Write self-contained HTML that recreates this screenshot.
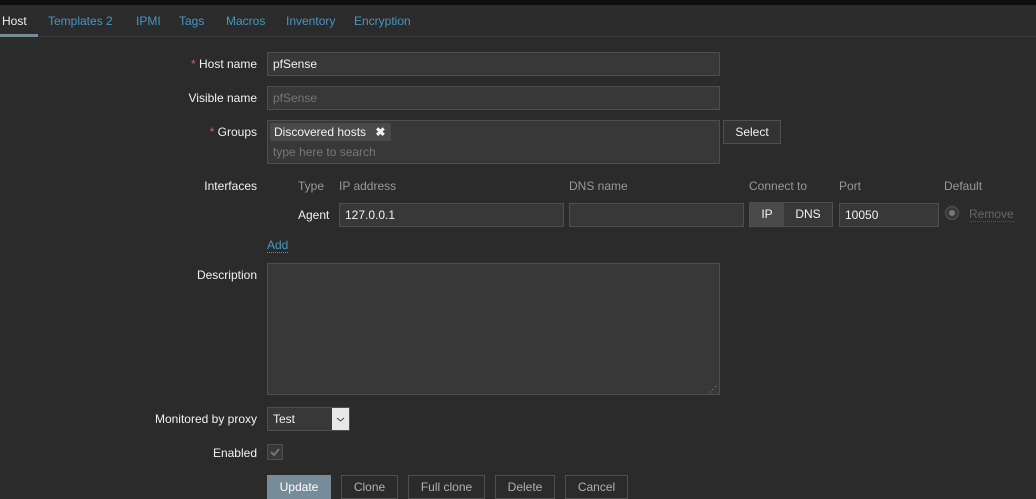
<!DOCTYPE html>
<html><head><style>
*{box-sizing:border-box;margin:0;padding:0}
body{width:1036px;height:498px;background:#2b2b2b;font-family:"Liberation Sans",sans-serif;font-size:12px;color:#f2f2f2;position:relative;overflow:hidden}
.a{position:absolute;white-space:nowrap}
.top{left:0;top:0;width:1036px;height:5px;background:#0e0e0e}
.tabs{left:0;top:5px;width:1036px;height:32px;border-bottom:1px solid #383838}
.tab{top:14px;color:#4796c4;font-size:12px}
.lbl{text-align:right;right:779px;color:#f2f2f2}
.req{color:#e45959}
.in{background:#383838;border:1px solid #4f4f4f;padding:0 5px;line-height:22px;color:#f2f2f2}
.hd{top:179px;color:#999}
.btn{border:1px solid #4f4f4f;color:#b0b0b0;text-align:center;line-height:23px}
</style></head><body>
<div class="a top"></div>
<div class="a tabs"></div>
<div class="a" style="left:0;top:34px;width:38px;height:3px;background:#768d99"></div>
<div class="a tab" style="left:2px;color:#f2f2f2">Host</div>
<div class="a tab" style="left:48px">Templates 2</div>
<div class="a tab" style="left:136px">IPMI</div>
<div class="a tab" style="left:179px">Tags</div>
<div class="a tab" style="left:226px">Macros</div>
<div class="a tab" style="left:286px">Inventory</div>
<div class="a tab" style="left:354px">Encryption</div>

<div class="a lbl" style="top:57px"><span class="req">*</span> Host name</div>
<div class="a in" style="left:267px;top:52px;width:453px;height:24px">pfSense</div>
<div class="a lbl" style="top:91px">Visible name</div>
<div class="a in" style="left:267px;top:86px;width:453px;height:24px;color:#777">pfSense</div>
<div class="a lbl" style="top:125px"><span class="req">*</span> Groups</div>
<div class="a in" style="left:267px;top:120px;width:453px;height:44px;padding:0"></div>
<div class="a" style="left:270px;top:123px;width:121px;height:18px;background:#4a4a4a;border-radius:2px;padding-left:4px;line-height:18px">Discovered hosts <b style="margin-left:6px">✖</b></div>
<div class="a" style="left:273px;top:145px;color:#777">type here to search</div>
<div class="a btn" style="left:723px;top:120px;width:58px;height:24px;color:#f2f2f2;background:#333">Select</div>

<div class="a lbl" style="top:179px">Interfaces</div>
<div class="a hd" style="left:298px">Type</div>
<div class="a hd" style="left:339px">IP address</div>
<div class="a hd" style="left:569px">DNS name</div>
<div class="a hd" style="left:749px">Connect to</div>
<div class="a hd" style="left:839px">Port</div>
<div class="a hd" style="left:944px">Default</div>
<div class="a" style="left:298px;top:208px">Agent</div>
<div class="a in" style="left:339px;top:203px;width:225px;height:24px">127.0.0.1</div>
<div class="a in" style="left:569px;top:203px;width:175px;height:24px"></div>
<div class="a" style="left:749px;top:202px;width:84px;height:25px;border:1px solid #4f4f4f;background:#383838"></div>
<div class="a" style="left:750px;top:203px;width:34px;height:23px;background:#4a4a4a;text-align:center;line-height:23px">IP</div>
<div class="a" style="left:784px;top:203px;width:48px;height:23px;text-align:center;line-height:23px">DNS</div>
<div class="a in" style="left:839px;top:203px;width:100px;height:24px">10050</div>
<div class="a" style="left:945px;top:206px;width:14px;height:14px;border-radius:50%;border:1px solid #555;background:#383838"></div>
<div class="a" style="left:949px;top:210px;width:6px;height:6px;border-radius:50%;background:#777"></div>
<div class="a" style="left:969px;top:207px;color:#666;border-bottom:1px dotted #555">Remove</div>
<div class="a" style="left:267px;top:238px;color:#4796c4;border-bottom:1px dotted #4796c4">Add</div>

<div class="a lbl" style="top:268px">Description</div>
<div class="a in" style="left:267px;top:263px;width:453px;height:132px"></div>
<div class="a" style="left:709px;top:385px;color:#999;font-size:8px">⋰</div>

<div class="a lbl" style="top:412px">Monitored by proxy</div>
<div class="a in" style="left:267px;top:407px;width:83px;height:24px">Test</div>
<div class="a" style="left:332px;top:408px;width:17px;height:22px;background:#e8e8e8"><svg width="17" height="22"><path d="M5 10 L8.5 13 L12 10" stroke="#444" fill="none" stroke-width="1"/></svg></div>
<div class="a lbl" style="top:446px">Enabled</div>
<div class="a" style="left:267px;top:444px;width:16px;height:16px;border:1px solid #4f4f4f;background:#383838"><svg width="14" height="14"><path d="M3 7 L6 10 L11 4" stroke="#777" fill="none" stroke-width="2"/></svg></div>

<div class="a btn" style="left:267px;top:475px;width:64px;height:24px;background:#768d99;border-color:#768d99;color:#fff">Update</div>
<div class="a btn" style="left:341px;top:475px;width:57px;height:24px">Clone</div>
<div class="a btn" style="left:408px;top:475px;width:77px;height:24px">Full clone</div>
<div class="a btn" style="left:495px;top:475px;width:60px;height:24px">Delete</div>
<div class="a btn" style="left:565px;top:475px;width:63px;height:24px">Cancel</div>
</body></html>
